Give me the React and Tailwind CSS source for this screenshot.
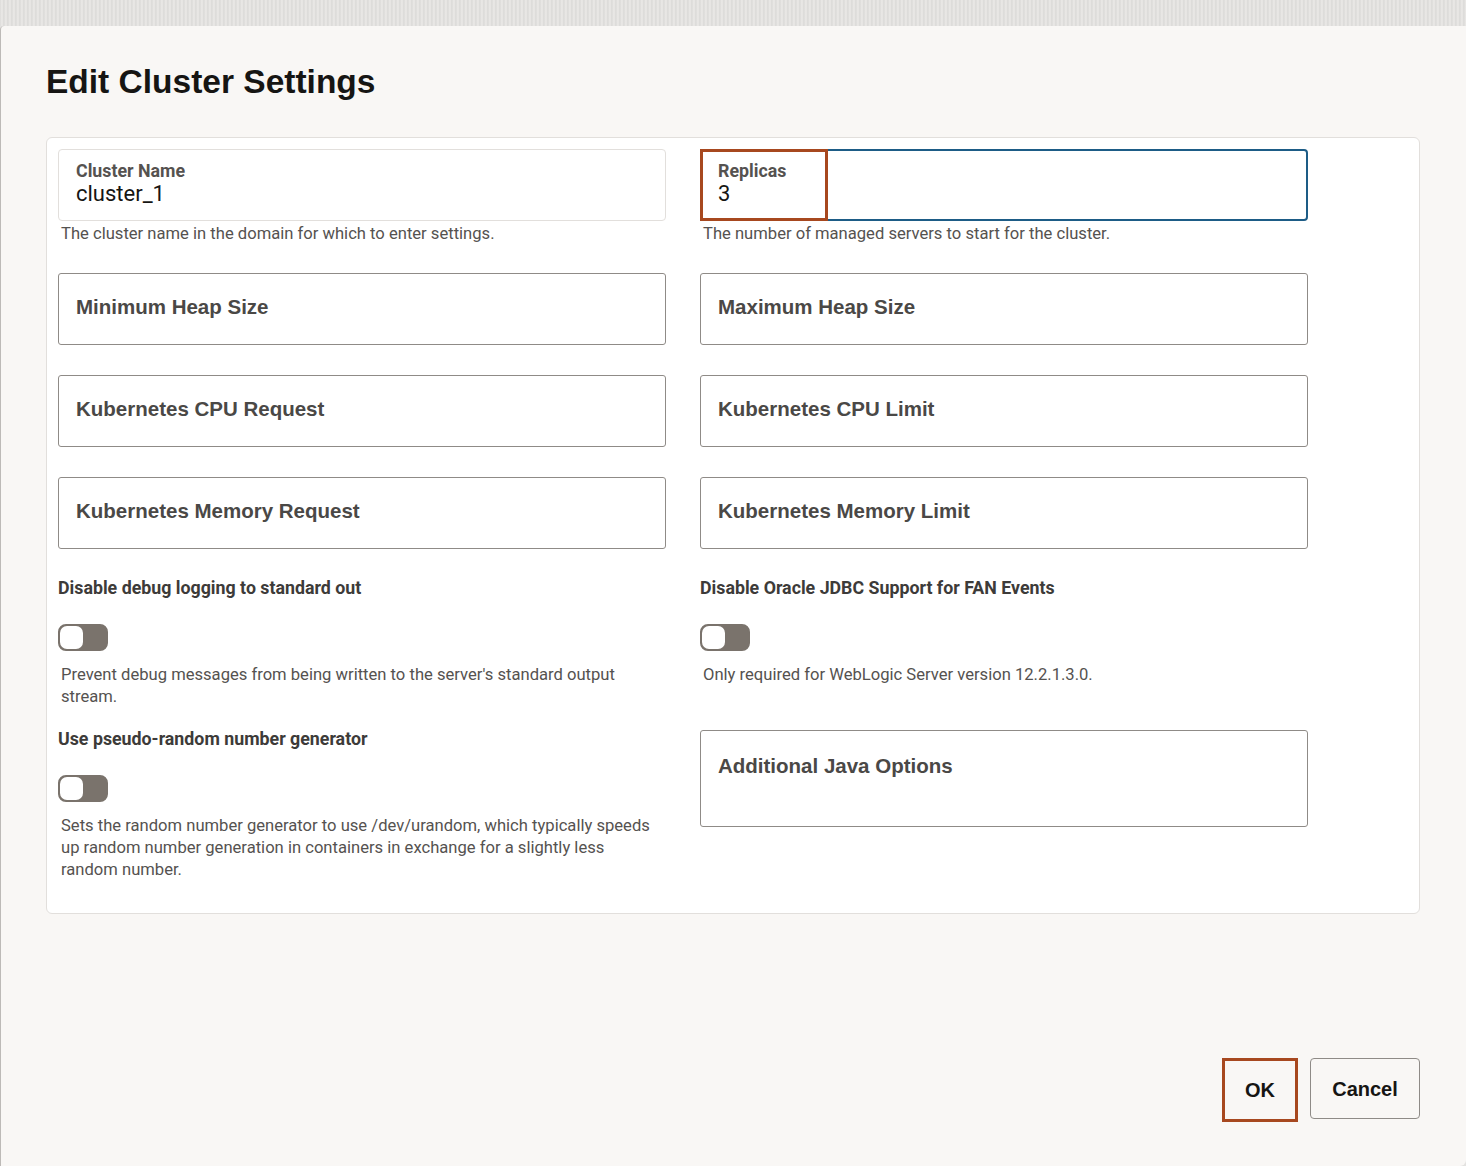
import React from 'react'

const ui = { fontFamily: 'Roboto, "Liberation Sans", Arial, sans-serif' }
const head = { fontFamily: '"Liberation Sans", Arial, sans-serif' }

/* ── Empty outlined input with placeholder-ish label ── */
function EmptyField({ label, tall = false }) {
  return (
    <div
      className={`border border-[#8f8b87] rounded-[3px] bg-white px-[17px] ${tall ? 'h-[97px] pt-[25px]' : 'h-[72px] flex items-center pb-[3px]'}`}
    >
      <span style={head} className="text-[20.5px] font-bold text-[#4a4846] leading-none">{label}</span>
    </div>
  )
}

function Toggle() {
  return (
    <div className="w-[50px] h-[27px] rounded-[8px] bg-[#7a736c] border-2 border-[#7a736c] flex items-center">
      <div className="w-[23px] h-[23px] rounded-[7px] bg-white" />
    </div>
  )
}

function Help({ children }) {
  return <p className="text-[16.6px] leading-[22px] text-[#555250] pl-[3px] pr-[10px]">{children}</p>
}

function SwitchBlock({ label, help }) {
  return (
    <div className="flex flex-col">
      <p className="text-[17.8px] font-bold text-[#3d3b39] leading-[20px]">{label}</p>
      <div className="mt-[26px] mb-[13px]"><Toggle /></div>
      <Help>{help}</Help>
    </div>
  )
}

export default function App() {
  return (
    <div style={ui} className="w-[1466px] h-[1166px] bg-[#e3e2e0] flex flex-col overflow-hidden">
      {/* backdrop strip */}
      <div className="h-[26px] bg-[repeating-linear-gradient(90deg,#dcdbd9_0px,#eceae8_2px,#d8d7d5_4px)]" />

      <div className="flex-1 bg-[#f9f7f5] border-l border-[#bdbab7] rounded-tl-[4px] rounded-br-[6px] pl-[45px] pr-[46px] flex flex-col">
        <h1 style={head} className="text-[33.5px] font-bold text-[#161513] mt-[38px] leading-[36px]">Edit Cluster Settings</h1>

        <div className="mt-[37px] bg-white border border-[#e2dfdc] rounded-[6px] px-[11px] pt-[11px] pb-[32px]">
          <div className="grid grid-cols-[608px_608px] gap-x-[34px]">
            {/* row 1 */}
            <div>
              <div className="h-[72px] border border-[#e2dfdc] rounded-[4px] px-[17px] pt-[11px]">
                <p className="text-[17.8px] font-bold text-[#555250] leading-[20px]">Cluster Name</p>
                <p className="text-[22px] text-[#161513] leading-[26px]">cluster_1</p>
              </div>
              <div className="mt-[2px]"><Help>The cluster name in the domain for which to enter settings.</Help></div>
            </div>
            <div>
              <div className="relative h-[72px] border-2 border-[#1d5c86] rounded-[4px] px-[16px] pt-[10px]">
                <p className="text-[17.8px] font-bold text-[#555250] leading-[20px]">Replicas</p>
                <p className="text-[22px] text-[#161513] leading-[26px]">3</p>
                <div className="absolute left-[-2px] top-[-2px] w-[128px] h-[72px] border-[3px] border-[#a7481f]" />
              </div>
              <div className="mt-[2px]"><Help>The number of managed servers to start for the cluster.</Help></div>
            </div>

            {/* rows 2-4 */}
            <div className="mt-[28px]"><EmptyField label="Minimum Heap Size" /></div>
            <div className="mt-[28px]"><EmptyField label="Maximum Heap Size" /></div>
            <div className="mt-[30px]"><EmptyField label="Kubernetes CPU Request" /></div>
            <div className="mt-[30px]"><EmptyField label="Kubernetes CPU Limit" /></div>
            <div className="mt-[30px]"><EmptyField label="Kubernetes Memory Request" /></div>
            <div className="mt-[30px]"><EmptyField label="Kubernetes Memory Limit" /></div>

            {/* switches */}
            <div className="mt-[29px]">
              <SwitchBlock
                label="Disable debug logging to standard out"
                help="Prevent debug messages from being written to the server's standard output stream."
              />
            </div>
            <div className="mt-[29px]">
              <SwitchBlock
                label="Disable Oracle JDBC Support for FAN Events"
                help="Only required for WebLogic Server version 12.2.1.3.0."
              />
            </div>
            <div className="mt-[21px]">
              <SwitchBlock
                label="Use pseudo-random number generator"
                help="Sets the random number generator to use /dev/urandom, which typically speeds up random number generation in containers in exchange for a slightly less random number."
              />
            </div>
            <div className="mt-[22px]">
              <EmptyField label="Additional Java Options" tall />
            </div>
          </div>
        </div>

        <div className="flex-1" />

        <div style={head} className="flex justify-end gap-[12px] mb-[44px]">
          <button className="w-[76px] h-[64px] border-[3px] border-[#a7481f] bg-[#f9f7f5] text-[20px] font-bold text-[#161513]">OK</button>
          <button className="w-[110px] h-[61px] border border-[#8f8b87] rounded-[4px] bg-[#f9f7f5] text-[20px] font-bold text-[#161513]">Cancel</button>
        </div>
      </div>
    </div>
  )
}
